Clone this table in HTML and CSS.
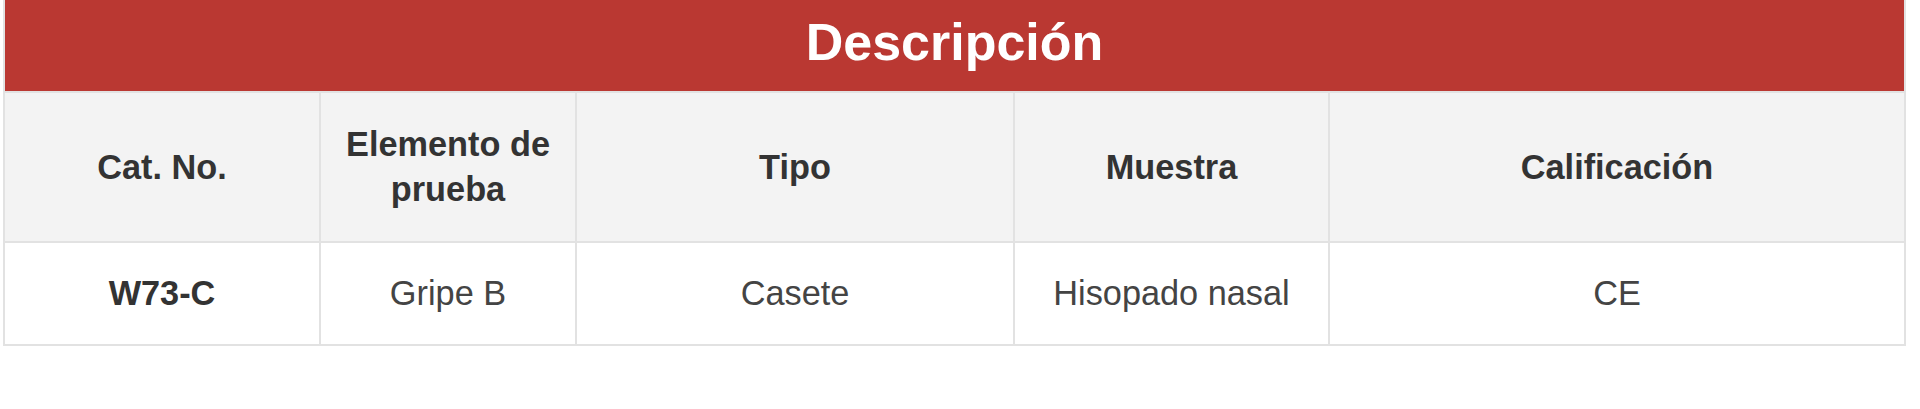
FILE: index.html
```html
<!DOCTYPE html>
<html lang="es">
<head>
<meta charset="utf-8">
<title>Descripción</title>
<link rel="stylesheet" href="styles.css">
</head>
<body>
<div class="wrap">
  <table class="spec">
    <colgroup>
      <col class="c1"><col class="c2"><col class="c3"><col class="c4"><col class="c5">
    </colgroup>
    <thead>
      <tr><th class="title" colspan="5">Descripción</th></tr>
      <tr class="heads">
        <th>Cat. No.</th>
        <th>Elemento de prueba</th>
        <th>Tipo</th>
        <th>Muestra</th>
        <th>Calificación</th>
      </tr>
    </thead>
    <tbody>
      <tr class="row">
        <td class="code">W73-C</td>
        <td>Gripe B</td>
        <td>Casete</td>
        <td>Hisopado nasal</td>
        <td>CE</td>
      </tr>
    </tbody>
  </table>
</div>
</body>
</html>
```

FILE: styles.css
```css
html, body {
  margin: 0;
  padding: 0;
  background: #ffffff;
}

.wrap {
  padding: 0 0 0 3px;
}

.spec {
  width: 1901px;
  border-collapse: collapse;
  table-layout: fixed;
  font-family: "Liberation Sans", Arial, sans-serif;
  font-size: 34.3px;
  line-height: 45px;
  color: #444444;
}

.c1 { width: 316px; }
.c2 { width: 256px; }
.c3 { width: 438px; }
.c4 { width: 315px; }
.c5 { width: 576px; }

.spec th,
.spec td {
  border: 2px solid #e2e2e2;
  text-align: center;
  vertical-align: middle;
}

.spec .title {
  background: #ba3832;
  color: #ffffff;
  font-size: 52px;
  line-height: 60px;
  font-weight: bold;
  height: 91px;
  box-sizing: border-box;
  padding: 12px 0 19px;
  border-top: none;
  border-color: #ba3832 #e2e2e2 #e2e2e2 #e2e2e2;
}

.heads th {
  background: #f3f3f3;
  color: #333333;
  font-weight: bold;
  padding: 29px 24px;
  height: 90px;
}

.row td {
  background: #ffffff;
  padding: 28px 20px;
  height: 45px;
}

.row .code {
  font-weight: bold;
  color: #333333;
}
```
